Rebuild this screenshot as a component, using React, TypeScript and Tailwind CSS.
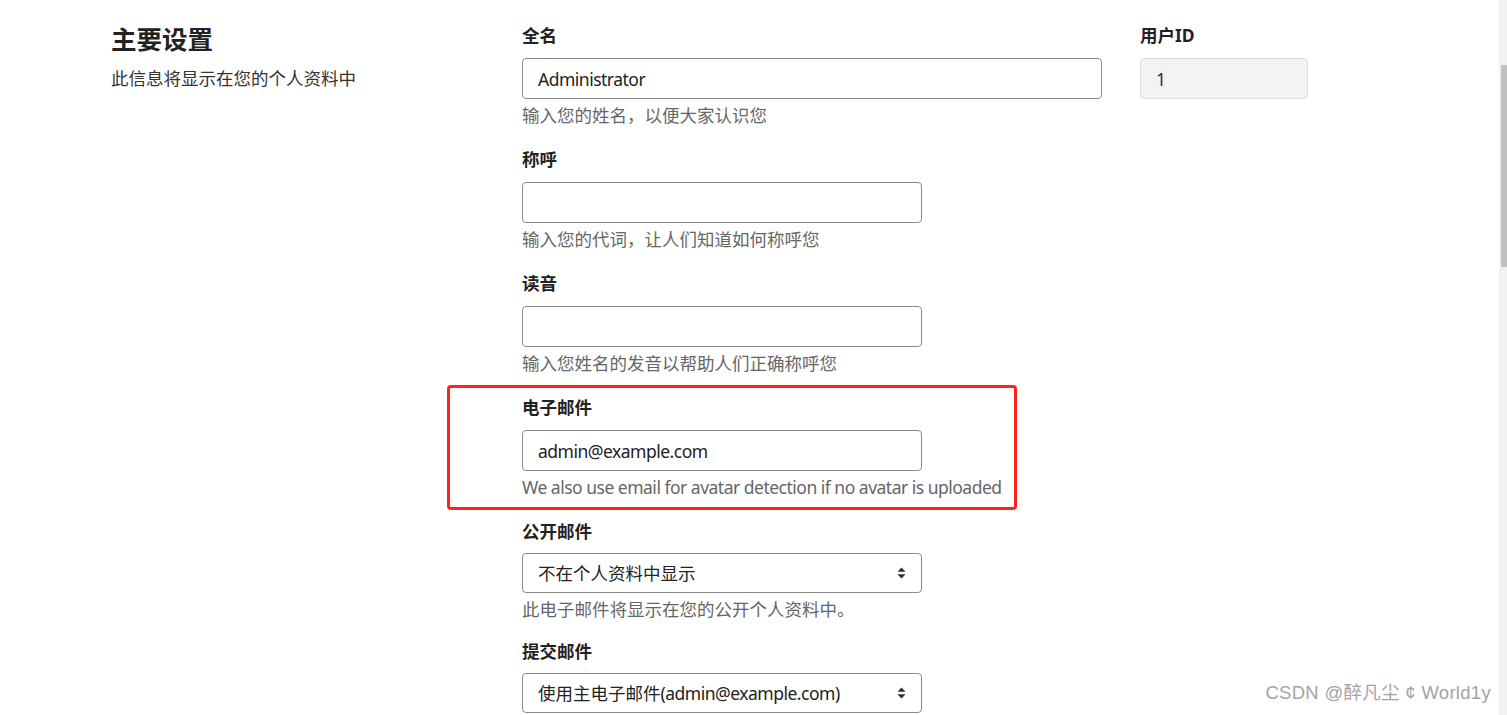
import React from "react";

const font = "font-['Noto_Sans','Noto_Sans_CJK_SC',sans-serif]";

interface FieldProps {
  label: string;
  value?: React.ReactNode;
  help?: React.ReactNode;
  width?: string;
  select?: boolean;
  last?: string;
}

const SortArrows = () => (
  <svg width="9" height="12" viewBox="0 0 9 12" className="shrink-0">
    <path d="M4.5 0.5 L8.5 4.8 L0.5 4.8 Z" fill="#333" />
    <path d="M4.5 11.5 L8.5 7.2 L0.5 7.2 Z" fill="#333" />
  </svg>
);

const Latin: React.FC<{ children: React.ReactNode }> = ({ children }) => (
  <span className="tracking-[-0.5px]">{children}</span>
);

const Field: React.FC<FieldProps> = ({ label, value = "", help, width = "w-[400px]", select, last = "mb-5" }) => {
  return (
    <div className={last}>
      <div className="h-6 leading-6 font-bold text-[17.5px] text-[#222]">{label}</div>
      {select ? (
        <div
          className={`mt-[10px] flex h-10 ${width} items-center justify-between rounded-[4px] border border-[#8a8a8a] pl-[15px] pr-[15px] text-[17.5px] text-[#222]`}
        >
          <span>{value}</span>
          <SortArrows />
        </div>
      ) : (
        <div
          className={`mt-[11px] flex h-[41px] ${width} items-center rounded-[4px] border border-[#8a8a8a] px-[15px] pt-[2px] text-[17.5px] text-[#222]`}
        >
          {value}
        </div>
      )}
      {help && <div className="mt-1 h-6 leading-6 text-[17.5px] text-[#666]">{help}</div>}
    </div>
  );
};

export default function App() {
  return (
    <div className={`flex h-[715px] w-[1507px] overflow-hidden bg-white ${font}`}>
      <div className="relative flex flex-1 pl-[111px] pt-[23px]">
        {/* left intro */}
        <div className="w-[411px]">
          <h2 className="h-8 leading-8 text-[25.5px] font-bold text-[#222]">主要设置</h2>
          <p className="mt-[11px] leading-6 text-[17.5px] text-[#333]">此信息将显示在您的个人资料中</p>
        </div>

        {/* main form */}
        <div className="w-[580px]">
          <Field
            label="全名"
            value={<Latin>Administrator</Latin>}
            help="输入您的姓名，以便大家认识您"
            width="w-[580px]"
          />
          <Field label="称呼" help="输入您的代词，让人们知道如何称呼您" />
          <Field label="读音" help="输入您姓名的发音以帮助人们正确称呼您" />
          <div className="relative">
            <Field
              label="电子邮件"
              value={<Latin>admin@example.com</Latin>}
              help={<Latin>We also use email for avatar detection if no avatar is uploaded</Latin>}
            />
            {/* highlight box */}
            <div className="pointer-events-none absolute left-[-75px] top-[-10px] h-[125px] w-[570px] rounded-[4px] border-[3px] border-[#ff2020]" />
          </div>
          <Field
            label="公开邮件"
            value="不在个人资料中显示"
            help="此电子邮件将显示在您的公开个人资料中。"
            select
            last="mb-[18px]"
          />
          <Field
            label="提交邮件"
            value={
              <>
                使用主电子邮件<Latin>(admin@example.com)</Latin>
              </>
            }
            select
          />
        </div>

        {/* user id */}
        <div className="ml-[38px] w-[168px]">
          <div className="h-6 leading-6 font-bold text-[17.5px] text-[#222]">用户ID</div>
          <div className="mt-[11px] flex h-[41px] items-center rounded-[4px] border border-[#dedede] bg-[#f3f3f3] px-[15px] pt-[2px] text-[17.5px] text-[#333]">
            1
          </div>
        </div>

        {/* watermark */}
        <div className="absolute bottom-[8px] right-[8px] font-['Liberation_Sans','Noto_Sans_CJK_SC',sans-serif] text-[18.5px] tracking-[0.3px] text-[#a3a3a3]">
          CSDN @醉凡尘 ¢ World1y
        </div>
      </div>

      {/* scrollbar */}
      <div className="flex w-2 justify-end bg-[#f1f1f1]">
        <div className="mt-[65px] h-[202px] w-1.5 bg-[#c1c1c1]" />
      </div>
    </div>
  );
}
